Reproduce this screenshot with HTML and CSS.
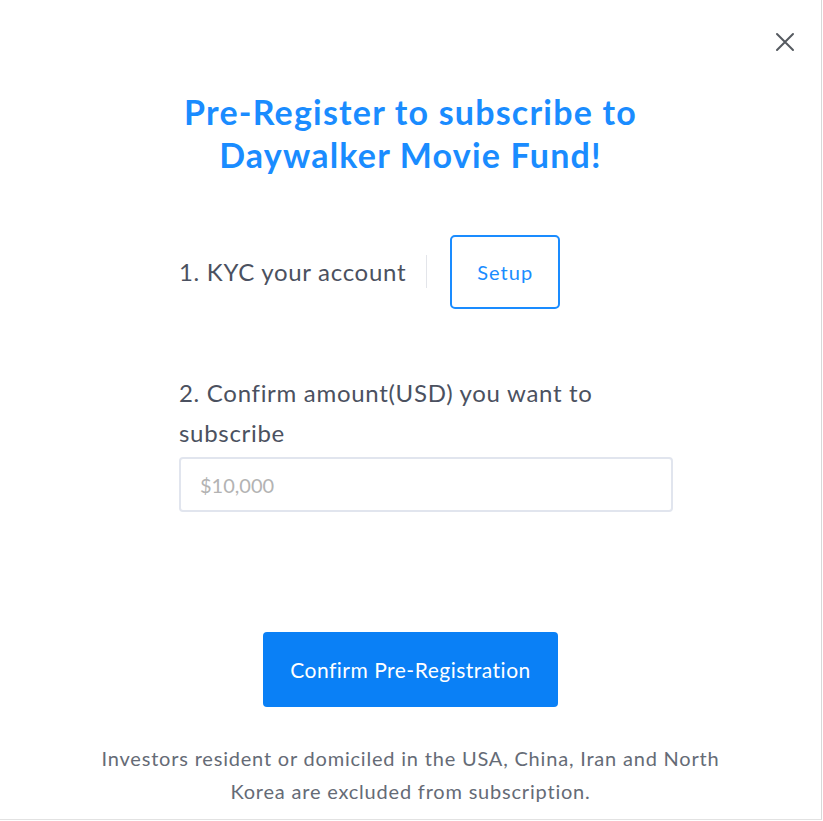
FILE: index.html
```html
<!DOCTYPE html>
<html lang="en">

<head>
    <meta charset="UTF-8">
    <meta name="viewport" content="width=device-width, initial-scale=1.0">
    <title>Pre-Register</title>
    <link rel="stylesheet" href="styles.css">
</head>

<body>
    <div class="modal">
        <button class="close" aria-label="Close">
            <svg width="20" height="20" viewBox="0 0 20 20">
                <path d="M2 2 L18 18 M18 2 L2 18" stroke="#555a60" stroke-width="2" fill="none" stroke-linecap="round" />
            </svg>
        </button>

        <h1 class="title">Pre-Register to subscribe to<br>Daywalker Movie Fund!</h1>

        <div class="form">
            <div class="step-one">
                <span class="label">1. KYC your account</span>
                <span class="divider"></span>
                <button class="setup">Setup</button>
            </div>

            <div class="step-two">
                <div class="label">2. Confirm amount(USD) you want to subscribe</div>
                <input class="amount" type="text" placeholder="$10,000">
            </div>
        </div>

        <div class="actions">
            <button class="confirm">Confirm Pre-Registration</button>
        </div>

        <p class="note">Investors resident or domiciled in the USA, China, Iran and North Korea are excluded from subscription.</p>
    </div>
</body>

</html>
```

FILE: styles.css
```css
body {
    margin: 0;
    padding: 0;
    background: #fff;
    font-family: Lato, "Noto Sans", sans-serif;
}

* {
    box-sizing: border-box;
}

.modal {
    position: relative;
    width: 822px;
    height: 820px;
    border-right: 1px solid #d8d8d8;
    border-bottom: 1px solid #e2e2e2;
    padding-top: 90px;
}

.close {
    position: absolute;
    top: 32px;
    right: 26px;
    width: 20px;
    height: 20px;
    padding: 0;
    border: none;
    background: none;
}

.title {
    margin: 0;
    text-align: center;
    color: #1a8cff;
    font-size: 34px;
    font-weight: 700;
    line-height: 43px;
    letter-spacing: 1.2px;
}

.form {
    width: 494px;
    margin-left: 179px;
    margin-top: 59px;
}

.step-one {
    display: flex;
    align-items: center;
    height: 73px;
}

.label {
    color: #4b5160;
    font-size: 24px;
    line-height: 40px;
    letter-spacing: 0.7px;
}

.divider {
    width: 1px;
    height: 33px;
    background: #e3e5ea;
    margin: 0 23px 0 20px;
}

.setup {
    width: 110px;
    height: 74px;
    border: 2px solid #1a8cff;
    border-radius: 5px;
    background: #fff;
    color: #1a8cff;
    font-family: inherit;
    font-size: 20px;
    letter-spacing: 1px;
}

.step-two {
    margin-top: 65px;
}

.amount {
    display: block;
    width: 100%;
    height: 55px;
    margin-top: 4px;
    border: 2px solid #e1e5ee;
    border-radius: 4px;
    padding: 0 19px;
    font-family: inherit;
    font-size: 20px;
    color: #333;
}

.amount::placeholder {
    color: #b3b3b3;
}

.actions {
    display: flex;
    justify-content: center;
    margin-top: 120px;
}

.confirm {
    width: 295px;
    height: 75px;
    border: none;
    border-radius: 4px;
    background: #0a80f6;
    color: #fff;
    font-family: inherit;
    font-size: 21px;
    letter-spacing: 0.5px;
}

.note {
    width: 640px;
    margin: 35px auto 0;
    text-align: center;
    color: #656b76;
    font-size: 20px;
    line-height: 33px;
    letter-spacing: 0.8px;
}
```
